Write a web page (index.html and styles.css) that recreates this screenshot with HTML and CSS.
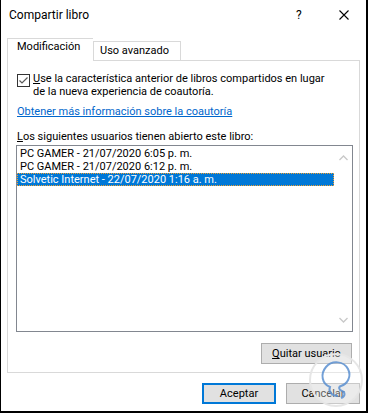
FILE: index.html
```html
<!DOCTYPE html>
<html lang="es">
<head>
    <meta charset="UTF-8">
    <title>Compartir libro</title>
    <link rel="stylesheet" href="styles.css">
</head>
<body>
    <div class="dialog">
        <div class="titlebar">
            <span class="title">Compartir libro</span>
            <span class="help">?</span>
            <span class="close">
                <svg width="10" height="10" viewBox="0 0 10 10"><path d="M0.5 0.5 L9.5 9.5 M9.5 0.5 L0.5 9.5" stroke="#000" stroke-width="1.1" fill="none"/></svg>
            </span>
        </div>

        <div class="tabs">
            <div class="tab active">Modificación</div>
            <div class="tab">Uso avanzado</div>
        </div>

        <div class="panel">
            <div class="check-row">
                <span class="checkbox">
                    <svg width="11" height="11" viewBox="0 0 11 11"><path d="M1.5 5.5 L4 8 L9.5 2.5" stroke="#5a5a5a" stroke-width="1.2" fill="none"/></svg>
                </span>
                <label class="check-label"><u>U</u>se la característica anterior de libros compartidos en lugar<br>de la nueva experiencia de coautoría.</label>
            </div>

            <a class="link" href="#">Obtener más información sobre la coautoría</a>

            <div class="list-label"><u>L</u>os siguientes usuarios tienen abierto este libro:</div>

            <div class="listbox">
                <div class="items">
                    <div class="item">PC GAMER - 21/07/2020 6:05 p. m.</div>
                    <div class="item">PC GAMER - 21/07/2020 6:12 p. m.</div>
                    <div class="item selected">Solvetic Internet - 22/07/2020 1:16 a. m.</div>
                </div>
                <div class="scroll">
                    <svg width="9" height="6" viewBox="0 0 9 6"><path d="M0.5 5 L4.5 1 L8.5 5" stroke="#c8c8c8" stroke-width="1.3" fill="none"/></svg>
                    <svg width="9" height="6" viewBox="0 0 9 6"><path d="M0.5 1 L4.5 5 L8.5 1" stroke="#c8c8c8" stroke-width="1.3" fill="none"/></svg>
                </div>
            </div>

            <div class="panel-actions">
                <button class="btn"><u>Q</u>uitar usuario</button>
            </div>
        </div>

        <div class="footer">
            <button class="btn default">Aceptar</button>
            <button class="btn">Cancelar</button>
        </div>

        <!-- marca de agua -->
        <svg class="watermark" width="56" height="56" viewBox="0 0 56 56">
            <circle cx="28" cy="28" r="26" fill="rgba(255,255,255,0.35)" stroke="#e6e6e6" stroke-width="2"/>
            <path d="M30 44 C 24 44, 20 40, 22 35 C 14 32, 12 22, 18 15 C 24 8, 36 9, 40 17 C 44 25, 39 32, 33 34 C 30 35, 31 38, 34 39 C 37 40, 38 44, 33 46" stroke="#5b8fd0" stroke-width="2" fill="none" opacity="0.85"/>
        </svg>
    </div>
</body>
</html>
```

FILE: styles.css
```css
* {
    box-sizing: border-box;
    margin: 0;
    padding: 0;
}

body {
    width: 368px;
    height: 413px;
    font-family: "Segoe UI", Roboto, "Noto Sans", sans-serif;
    font-size: 11px;
    color: #000;
    background: #fff;
}

.dialog {
    position: relative;
    width: 368px;
    height: 413px;
    background: #fff;
    border-left: 1px solid #000;
    border-right: 2px solid #000;
    border-bottom: 2px solid #000;
    overflow: hidden;
}

.titlebar {
    display: flex;
    align-items: center;
    height: 30px;
    padding-left: 8px;
    padding-right: 17px;
}

.title {
    font-size: 12px;
    flex: 1;
}

.help {
    font-size: 12px;
    width: 43px;
}

.close {
    display: flex;
    width: 10px;
}

.tabs {
    display: flex;
    align-items: flex-end;
    height: 30px;
    margin-left: 6px;
    position: relative;
    z-index: 1;
}

.tab {
    border: 1px solid #d9d9d9;
    border-bottom: none;
    height: 19px;
    padding: 0 0 0 6px;
    line-height: 18px;
    background: #fff;
    white-space: nowrap;
}

.tab.active {
    height: 23px;
    width: 86px;
    padding-left: 9px;
    margin-bottom: -1px;
    line-height: 15px;
    border-right: none;
}

.tab + .tab {
    width: 88px;
}

.panel {
    margin-left: 6px;
    width: 353px;
    height: 313px;
    border: 1px solid #d9d9d9;
    padding: 11px 7px 0 9px;
    display: flex;
    flex-direction: column;
}

.check-row {
    display: flex;
    align-items: flex-start;
}

.checkbox {
    width: 13px;
    height: 13px;
    border: 1px solid #333;
    display: flex;
    align-items: center;
    justify-content: center;
    margin-right: 3px;
    flex-shrink: 0;
    margin-top: 2px;
}

.check-label {
    line-height: 13px;
    white-space: nowrap;
}

.link {
    display: block;
    margin-top: 7px;
    color: #0066cc;
    line-height: 13px;
}

.list-label {
    margin-top: 12px;
    line-height: 13px;
}

.listbox {
    margin-top: 2px;
    margin-left: -1px;
    width: 337px;
    height: 187px;
    border: 1px solid #828790;
    display: flex;
    padding: 1px 0 0 0;
}

.items {
    flex: 1;
}

.item {
    height: 13px;
    line-height: 13px;
    padding-left: 3px;
    width: 317px;
    white-space: nowrap;
}

.item.selected {
    background: #0078d7;
    color: #fff;
    outline: 1px dotted #f0a030;
    outline-offset: -1px;
}

.scroll {
    width: 17px;
    display: flex;
    flex-direction: column;
    justify-content: space-between;
    align-items: center;
    padding: 8px 0 8px;
}

.panel-actions {
    display: flex;
    justify-content: flex-end;
    margin-top: 11px;
}

.btn {
    font-family: inherit;
    font-size: 11px;
    background: #e1e1e1;
    border: 1px solid #adadad;
    height: 21px;
    color: #000;
}

.panel-actions .btn {
    width: 91px;
}

.footer {
    display: flex;
    justify-content: flex-end;
    gap: 10px;
    padding: 10px 6px 0 0;
}

.footer .btn {
    width: 74px;
}

.btn.default {
    border: 2px solid #0078d7;
}

.watermark {
    position: absolute;
    left: 307px;
    top: 352px;
}
```
